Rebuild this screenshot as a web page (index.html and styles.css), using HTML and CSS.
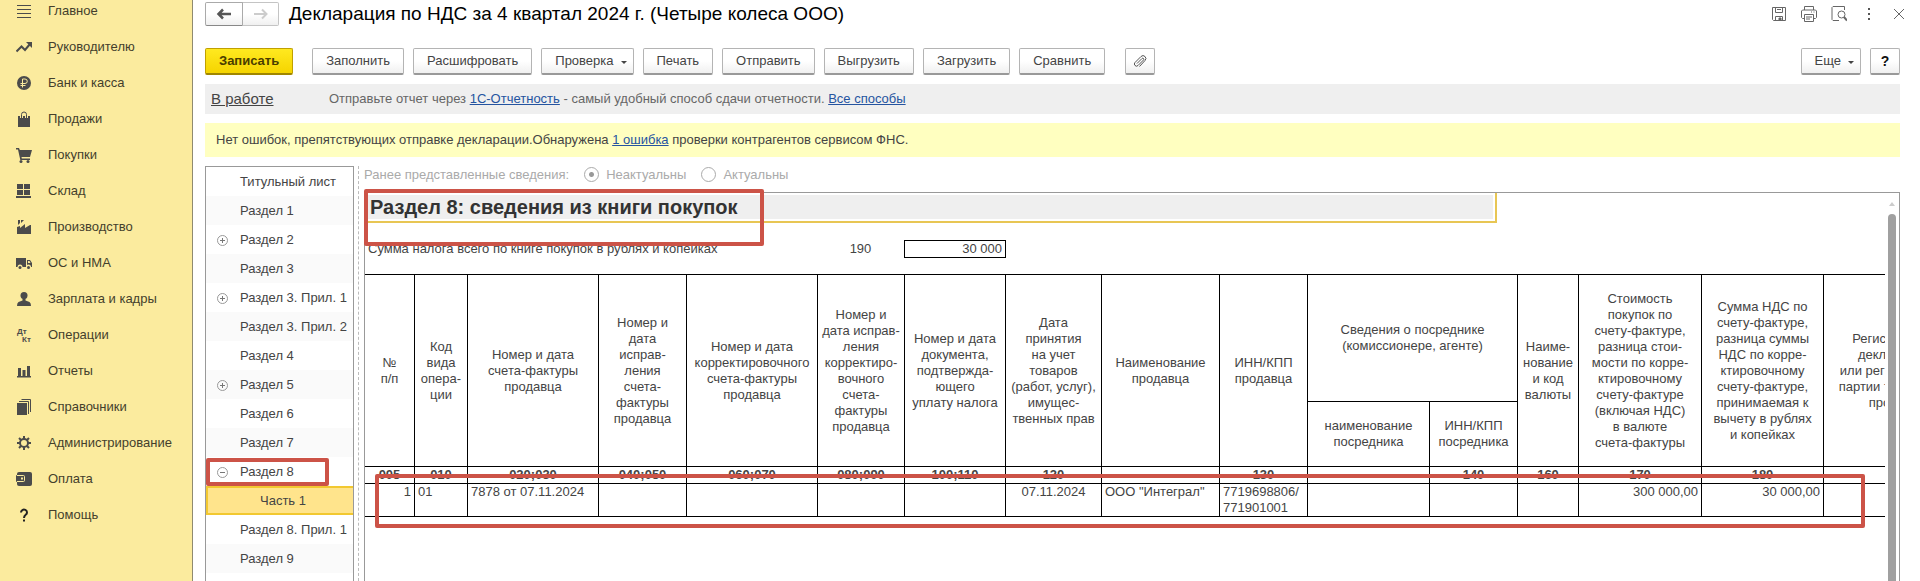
FILE: index.html
```html
<!DOCTYPE html>
<html lang="ru">
<head>
  <meta charset="UTF-8">
  <meta name="viewport" content="width=device-width, initial-scale=1.0">
  <title>Декларация по НДС за 4 квартал 2024 г.</title>
  <link rel="stylesheet" href="styles.css">
</head>
<body>
  <nav class="sidebar">
    <a href="#"><svg viewBox="0 0 16 16"><path d="M1 2.500h14M1 6.500h14M1 10.500h14M1 14.500h14" class="line"/></svg>Главное</a>
    <a href="#"><svg viewBox="0 0 16 16"><path d="M.5 12.500l5-5 3.500 3.500 5-6" class="line thick"/><path d="M10 3h6v6z"/></svg>Руководителю</a>
    <a href="#"><svg viewBox="0 0 16 16"><circle cx="8" cy="8" r="7"/><path d="M6.500 12.500V4h2.500a2.200 2.200 0 0 1 0 4.500H4.500M4.500 10.500h5" class="line light"/></svg>Банк и касса</a>
    <a href="#"><svg viewBox="0 0 16 16"><path d="M2 5h12v11H2z"/><path d="M5.500 7V3.500a2.500 2.500 0 0 1 5 0V7" class="line halo"/><path d="M5.500 7V3.500a2.500 2.500 0 0 1 5 0V7" class="line"/></svg>Продажи</a>
    <a href="#"><svg viewBox="0 0 16 16"><path d="M0 1h3l.8 2H16l-2 7H5.500l.3 1.500H14V13H4.300L2 2.500H0z"/><circle cx="5" cy="14.500" r="1.500"/><circle cx="12" cy="14.500" r="1.500"/></svg>Покупки</a>
    <a href="#"><svg viewBox="0 0 16 16"><path d="M1 1h6v5H1zM8 1h6v5H8zM1 7h6v5H1zM8 7h6v5H8zM0 13h15v2H0z"/></svg>Склад</a>
    <a href="#"><svg viewBox="0 0 16 16"><path d="M1 15V8l3-1v2l5-4v4l5-3h1v9zM2 1h2v3L2 6zM5 1h3l-3 3z"/></svg>Производство</a>
    <a href="#"><svg viewBox="0 0 16 16"><path d="M0 3h10v9H0zM11 5h3l2 3v4h-5z"/><path d="M12 6h1.500l1 2H12z" class="hole"/><circle cx="4" cy="12" r="2.500" class="hole"/><circle cx="12.500" cy="12" r="2.500" class="hole"/><circle cx="4" cy="12.500" r="1.500"/><circle cx="12.500" cy="12.500" r="1.500"/></svg>ОС и НМА</a>
    <a href="#"><svg viewBox="0 0 16 16"><circle cx="8" cy="4.500" r="3.500"/><path d="M6.500 7h3v2.500l4 1.500q1.500 1 1.500 4H1q0-3 1.500-4l4-1.500z"/></svg>Зарплата и кадры</a>
    <a href="#"><svg viewBox="0 0 16 16" class="dtkt"><text x="1" y="7">Дт</text><text x="6" y="15">Кт</text></svg>Операции</a>
    <a href="#"><svg viewBox="0 0 16 16"><path d="M1 13h14v1.500H1zM2 5h3v8H2zM6.500 7h3v6h-3zM11 3h3v10h-3z"/></svg>Отчеты</a>
    <a href="#"><svg viewBox="0 0 16 16"><path d="M1 4h10v12H1z"/><path d="M3 2.500h9.500V15M5.500.5h9V13" class="line"/></svg>Справочники</a>
    <a href="#"><svg viewBox="0 0 16 16"><circle cx="8" cy="8" r="4" class="line thick"/><path d="M8 1v3M8 12v3M1 8h3M12 8h3M3 3l2 2M11 11l2 2M3 13l2-2M11 5l2-2" class="line thick"/></svg>Администрирование</a>
    <a href="#"><svg viewBox="0 0 16 16"><rect x="1" y="1" width="15" height="14" rx="2"/><rect x="0" y="4" width="9" height="7" rx="1"/><path d="M1 4.500h6.500q1 0 1 1v4q0 1-1 1H1" class="line light"/><path d="M5 6.500h2v2H5z" class="hole"/></svg>Оплата</a>
    <a href="#"><svg viewBox="0 0 16 16"><path d="M5 5.500a3 2.800 0 1 1 4.700 2.200Q8 9 8 11" class="line thick dark"/><path d="M7 12.500h2v2H7z" class="dark-fill"/></svg>Помощь</a>
  </nav>

  <main class="main">
    <header class="header">
      <div class="history">
        <button type="button" aria-label="Назад"><svg width="16" height="14" viewBox="0 0 16 14"><path d="M15 7H3M7 2.500L2.500 7 7 11.500" fill="none" stroke="#555" stroke-width="2.500"/></svg></button>
        <button type="button" aria-label="Вперед" disabled><svg width="16" height="14" viewBox="0 0 16 14"><path d="M1 7h12M9 2.500L13.500 7 9 11.500" fill="none" stroke="#ccc" stroke-width="2"/></svg></button>
      </div>
      <h1>Декларация по НДС за 4 квартал 2024 г. (Четыре колеса ООО)</h1>
      <div class="window-actions">
        <button type="button" aria-label="Сохранить"><svg viewBox="0 0 16 16"><path d="M1.500 1.500h13v13h-12l-1-1zM4.500 1.500v5h7v-5M6 3.500h4M4.500 14.500v-4h7v4"/><path d="M8 12h2v2H8z" fill="#666"/></svg></button>
        <button type="button" aria-label="Печать"><svg viewBox="0 0 16 16"><path d="M3.500 4V.5h9V4M3.500 12.500h-2l-1-1V5l1-1h13l1 1v6.500l-1 1h-2M3.500 8.500h9v7h-9zM5 11h6M5 13h4M10 6h1M12.500 6h1"/></svg></button>
        <button type="button" aria-label="Просмотр"><svg viewBox="0 0 16 16"><path d="M8 14.500H2l-1-1v-12l1-1h11.500V4"/><circle cx="10.500" cy="8.500" r="3.500"/><path d="M13 11l3 3.500" stroke-width="2"/></svg></button>
        <button type="button" aria-label="Меню"><svg viewBox="0 0 16 16"><path d="M7 2h2v2H7zM7 7h2v2H7zM7 12h2v2H7z" fill="#555" stroke="none"/></svg></button>
        <button type="button" aria-label="Закрыть"><svg viewBox="0 0 16 16"><path d="M3 3l10 10M13 3L3 13"/></svg></button>
      </div>
    </header>

    <div class="content">
      <div class="toolbar">
        <button type="button" class="btn primary">Записать</button>
        <button type="button" class="btn">Заполнить</button>
        <button type="button" class="btn">Расшифровать</button>
        <button type="button" class="btn dropdown">Проверка</button>
        <button type="button" class="btn">Печать</button>
        <button type="button" class="btn">Отправить</button>
        <button type="button" class="btn">Выгрузить</button>
        <button type="button" class="btn">Загрузить</button>
        <button type="button" class="btn">Сравнить</button>
        <button type="button" class="btn square attach" aria-label="Файлы"><svg width="14" height="14" viewBox="0 0 14 14"><path d="M4 9.500l5-5a1 1 0 0 1 1.500 1.500l-5.500 5.500a2 2 0 0 1-3-3L8 2.500a2.700 2.700 0 0 1 4 4L6.500 12.500" fill="none" stroke="#555"/></svg></button>
        <button type="button" class="btn dropdown more">Еще</button>
        <button type="button" class="btn square help">?</button>
      </div>

      <div class="status">
        <a href="#" class="state">В работе</a>
        <p>Отправьте отчет через <a href="#">1С-Отчетность</a> - самый удобный способ сдачи отчетности. <a href="#">Все способы</a></p>
      </div>
      <div class="notice">
        <p>Нет ошибок, препятствующих отправке декларации.Обнаружена <a href="#">1 ошибка</a> проверки контрагентов сервисом ФНС.</p>
      </div>

      <div class="report">
        <ul class="tree">
          <li>Титульный лист</li>
          <li>Раздел 1</li>
          <li class="closed">Раздел 2</li>
          <li>Раздел 3</li>
          <li class="closed">Раздел 3. Прил. 1</li>
          <li>Раздел 3. Прил. 2</li>
          <li>Раздел 4</li>
          <li class="closed">Раздел 5</li>
          <li>Раздел 6</li>
          <li>Раздел 7</li>
          <li class="opened">Раздел 8<span class="mark mark-section"></span></li>
          <li class="child selected">Часть 1</li>
          <li>Раздел 8. Прил. 1</li>
          <li>Раздел 9</li>
          <li></li>
        </ul>
        <div class="splitter"></div>

        <div class="form">
          <div class="actuality">
            <span>Ранее представленные сведения:</span>
            <input type="radio" name="actuality" id="old" checked disabled>
            <label for="old">Неактуальны</label>
            <input type="radio" name="actuality" id="actual" disabled>
            <label for="actual">Актуальны</label>
          </div>

          <div class="sheet">
            <div class="sheet-view">
              <div class="sheet-title"><h2>Раздел 8: сведения из книги покупок</h2></div>
              <div class="total">
                <span>Сумма налога всего по книге покупок в рублях и копейках</span>
                <span class="total-code">190</span>
                <span class="total-value">30 000</span>
              </div>
              <table>
                <colgroup>
                  <col class="w50"><col class="w53"><col class="w131"><col class="w88"><col class="w131"><col class="w87"><col class="w101"><col class="w96">
                  <col class="w118"><col class="w88"><col class="w122"><col class="w88"><col class="w61"><col class="w123"><col class="w122"><col class="w206">
                </colgroup>
                <thead>
                  <tr class="head-top">
                    <th rowspan="2">№<br>п/п</th>
                    <th rowspan="2">Код<br>вида<br>опера-<br>ции</th>
                    <th rowspan="2">Номер и дата<br>счета-фактуры<br>продавца</th>
                    <th rowspan="2">Номер и<br>дата<br>исправ-<br>ления<br>счета-<br>фактуры<br>продавца</th>
                    <th rowspan="2">Номер и дата<br>корректировочного<br>счета-фактуры<br>продавца</th>
                    <th rowspan="2">Номер и<br>дата исправ-<br>ления<br>корректиро-<br>вочного<br>счета-<br>фактуры<br>продавца</th>
                    <th rowspan="2">Номер и дата<br>документа,<br>подтвержда-<br>ющего<br>уплату налога</th>
                    <th rowspan="2">Дата<br>принятия<br>на учет<br>товаров<br>(работ, услуг),<br>имущес-<br>твенных прав</th>
                    <th rowspan="2">Наименование<br>продавца</th>
                    <th rowspan="2">ИНН/КПП<br>продавца</th>
                    <th colspan="2">Сведения о посреднике<br>(комиссионере, агенте)</th>
                    <th rowspan="2">Наиме-<br>нование<br>и код<br>валюты</th>
                    <th rowspan="2">Стоимость<br>покупок по<br>счету-фактуре,<br>разница стои-<br>мости по корре-<br>ктировочному<br>счету-фактуре<br>(включая НДС)<br>в валюте<br>счета-фактуры</th>
                    <th rowspan="2">Сумма НДС по<br>счету-фактуре,<br>разница суммы<br>НДС по корре-<br>ктировочному<br>счету-фактуре,<br>принимаемая к<br>вычету в рублях<br>и копейках</th>
                    <th rowspan="2">Регистрационный номер<br>декларации на товары<br>или регистрационный номер<br>партии товара, подлежащего<br>прослеживаемости</th>
                  </tr>
                  <tr class="head-bottom">
                    <th>наименование<br>посредника</th>
                    <th>ИНН/КПП<br>посредника</th>
                  </tr>
                  <tr class="codes">
                    <th>005</th><th>010</th><th>020;030</th><th>040;050</th><th>060;070</th><th>080;090</th><th>100;110</th><th>120</th>
                    <th></th><th>130</th><th></th><th>140</th><th>160</th><th>170</th><th>180</th><th></th>
                  </tr>
                </thead>
                <tbody>
                  <tr>
                    <td class="num">1</td>
                    <td>01</td>
                    <td>7878 от 07.11.2024</td>
                    <td></td>
                    <td></td>
                    <td></td>
                    <td></td>
                    <td class="date">07.11.2024</td>
                    <td>ООО "Интеграл"</td>
                    <td>7719698806/<br>771901001</td>
                    <td></td>
                    <td></td>
                    <td></td>
                    <td class="num">300 000,00</td>
                    <td class="num">30 000,00</td>
                    <td></td>
                  </tr>
                </tbody>
              </table>
            </div>
            <div class="scrollbar"><i class="scroll-up"></i><i class="scroll-thumb"></i></div>
            <span class="mark mark-title"></span>
            <span class="mark mark-row"></span>
          </div>
        </div>
      </div>
    </div>
  </main>
</body>
</html>
```

FILE: styles.css
```css
* {
  box-sizing: border-box;
}
body {
  margin: 0;
  height: 100vh;
  display: flex;
  overflow: hidden;
  background: #fff;
  color: #444;
  font: 13px/16px "Liberation Sans", Arial, sans-serif;
}
h1, h2, p, ul {
  margin: 0;
  padding: 0;
}
button, input {
  font: inherit;
  margin: 0;
}
a {
  color: #2554a0;
}

/* Sections panel */
.sidebar {
  flex: 0 0 193px;
  margin-top: -7px;
  background: #fbeb9e;
  border-right: 1px solid #8f8a70;
}
.sidebar a {
  display: flex;
  align-items: center;
  gap: 16px;
  height: 36px;
  padding-left: 16px;
  color: #443f2c;
  text-decoration: none;
}
.sidebar svg {
  width: 16px;
  height: 16px;
  fill: #4b4b4b;
}
.line {
  fill: none;
  stroke: #4b4b4b;
}
.thick {
  stroke-width: 2;
}
.light {
  stroke: #fbeb9e;
}
.halo {
  stroke: #fbeb9e;
  stroke-width: 3;
}
.hole {
  fill: #fbeb9e;
}
.dark {
  stroke: #222;
}
.dark-fill {
  fill: #222;
}
.dtkt text {
  font-size: 8px;
  font-weight: bold;
}

.main {
  flex: 1;
  min-width: 0;
  display: flex;
  flex-direction: column;
}
.header {
  display: flex;
  align-items: center;
  padding: 2px 6px 0 12px;
}
.history {
  display: flex;
  margin-right: 10px;
}
.history button {
  display: flex;
  align-items: center;
  justify-content: center;
  width: 38px;
  height: 24px;
  padding: 0;
  border: 1px solid #aaa;
  border-bottom-color: #888;
  border-radius: 2px 0 0 2px;
  background: linear-gradient(#fff 50%, #f0f0f0);
}
.history button + button {
  width: 37px;
  margin-left: -1px;
  border-color: #c4c4c4;
  border-left-color: #aaa;
  border-radius: 0 2px 2px 0;
}
h1 {
  flex: 1;
  color: #000;
  font-size: 19px;
  font-weight: normal;
  line-height: 24px;
}
.window-actions {
  display: flex;
}
.window-actions button {
  display: flex;
  align-items: center;
  justify-content: center;
  width: 30px;
  height: 24px;
  padding: 0;
  border: 0;
  background: none;
}
.window-actions svg {
  width: 16px;
  height: 16px;
  fill: none;
  stroke: #666;
}

.content {
  flex: 1;
  min-height: 0;
  display: flex;
  flex-direction: column;
  gap: 9px;
  padding: 22px 20px 0 12px;
}
.toolbar {
  display: flex;
  gap: 9px;
}
.btn {
  height: 27px;
  padding: 0 13px;
  border: 1px solid #b4b4b4;
  border-bottom: 2px solid #999;
  border-radius: 2px;
  background: linear-gradient(#fff 50%, #f0f0f0);
  color: #444;
  white-space: nowrap;
}
.primary {
  margin-right: 10px;
  border-color: #c0a000;
  border-bottom-color: #a08600;
  background: linear-gradient(#ffe920, #f5d400);
  color: #4a3d00;
  font-weight: bold;
}
.dropdown {
  padding-right: 6px;
}
.dropdown::after {
  content: "";
  display: inline-block;
  margin-left: 7px;
  vertical-align: 1px;
  border: 3px solid transparent;
  border-top-color: #444;
  border-bottom: 0;
}
.square {
  width: 30px;
  padding: 0;
}
.attach {
  display: flex;
  align-items: center;
  justify-content: center;
  margin-left: 11px;
}
.more {
  margin-left: auto;
}
.help {
  color: #111;
  font-size: 14px;
  font-weight: bold;
}

.status {
  display: flex;
  align-items: center;
  height: 30px;
  padding-left: 6px;
  background: #efefef;
  color: #666;
}
.state {
  width: 118px;
  color: #444;
  font-size: 15px;
}
.notice {
  display: flex;
  align-items: center;
  height: 34px;
  padding-left: 11px;
  background: #ffffc0;
}

/* Declaration sections and the form itself */
.report {
  flex: 1;
  min-height: 0;
  display: flex;
}
.tree {
  flex: 0 0 149px;
  overflow: hidden;
  border: 1px solid #999;
  border-bottom: 0;
  list-style: none;
}
.tree li {
  position: relative;
  height: 29px;
  padding-left: 34px;
  line-height: 29px;
  white-space: nowrap;
}
.tree li:nth-child(even) {
  background: #fafafa;
}
.tree .child {
  padding-left: 52px;
}
.tree li.selected:nth-child(n) {
  border: 2px solid #f2c830;
  border-right: 0;
  background: #ffe48c;
  line-height: 25px;
}
.closed::before, .opened::before {
  content: "";
  position: absolute;
  left: 11px;
  top: 10px;
  width: 9px;
  height: 9px;
  border: 1px solid #999;
  border-radius: 50%;
  background: linear-gradient(#777, #777) center / 5px 1px no-repeat;
}
.closed::before {
  background: linear-gradient(#777, #777) center / 5px 1px no-repeat, linear-gradient(#777, #777) center / 1px 5px no-repeat;
}
.splitter {
  width: 5px;
  margin-right: 5px;
  border-right: 1px dashed #bbb;
}
.form {
  flex: 1;
  min-width: 0;
  display: flex;
  flex-direction: column;
}
.actuality {
  display: flex;
  align-items: center;
  height: 26px;
  padding-bottom: 9px;
  color: #aaa;
}
.actuality input {
  appearance: none;
  width: 15px;
  height: 15px;
  margin: 0 7px 0 15px;
  border: 1px solid #aaa;
  border-radius: 50%;
}
.actuality input:checked {
  background: radial-gradient(#999 2px, transparent 3px);
}

.sheet {
  position: relative;
  flex: 1;
  min-height: 0;
  display: flex;
  border: 1px solid #999;
  border-bottom: 0;
}
.sheet-view {
  flex: 1;
  min-width: 0;
  overflow: hidden;
}
.sheet-title {
  width: 1132px;
  padding: 2px 2px 2px 0;
  border-right: 2px solid #e8c654;
  border-bottom: 2px solid #e8c654;
}
h2 {
  padding-left: 5px;
  background: #efefef;
  color: #333;
  font-size: 20px;
  line-height: 24px;
}
.total {
  display: grid;
  grid-template-columns: 452px 87px 102px;
  margin: 17px 0 16px;
  line-height: 18px;
}
.total span:first-child {
  padding-left: 3px;
}
.total-code {
  text-align: center;
}
.total-value {
  padding-right: 3px;
  border: 1px solid #000;
  line-height: 16px;
  text-align: right;
}
table {
  width: 1665px;
  table-layout: fixed;
  border-collapse: separate;
  border-spacing: 0;
  border-top: 1px solid #000;
}
.w50 { width: 50px; }
.w53 { width: 53px; }
.w61 { width: 61px; }
.w87 { width: 87px; }
.w88 { width: 88px; }
.w96 { width: 96px; }
.w101 { width: 101px; }
.w118 { width: 118px; }
.w122 { width: 122px; }
.w123 { width: 123px; }
.w131 { width: 131px; }
.w206 { width: 206px; }
th, td {
  padding: 0;
  border-right: 1px solid #000;
  border-bottom: 1px solid #000;
  white-space: nowrap;
}
th {
  font-weight: normal;
}
td {
  height: 33px;
  padding: 0 3px;
  vertical-align: top;
}
.head-top {
  height: 127px;
}
.head-bottom {
  height: 65px;
}
.codes th {
  height: 17px;
  font-weight: bold;
}
.num {
  text-align: right;
}
.date {
  text-align: center;
}

.scrollbar {
  display: flex;
  flex-direction: column;
  align-items: center;
  gap: 8px;
  width: 14px;
  padding-top: 9px;
}
.scroll-up {
  border: 3px solid transparent;
  border-top: 0;
  border-bottom: 4px solid #ccc;
}
.scroll-thumb {
  flex: 1;
  width: 8px;
  border-radius: 4px 4px 0 0;
  background: #a0a0a0;
}

/* Red frames over the important places */
.mark {
  position: absolute;
  border: 4px solid #cc5347;
  border-radius: 2px;
}
.mark-section {
  left: 0;
  top: 1px;
  width: 123px;
  height: 28px;
}
.mark-title {
  left: -1px;
  top: -4px;
  width: 400px;
  height: 57px;
}
.mark-row {
  left: 10px;
  top: 281px;
  width: 1490px;
  height: 54px;
}
```
